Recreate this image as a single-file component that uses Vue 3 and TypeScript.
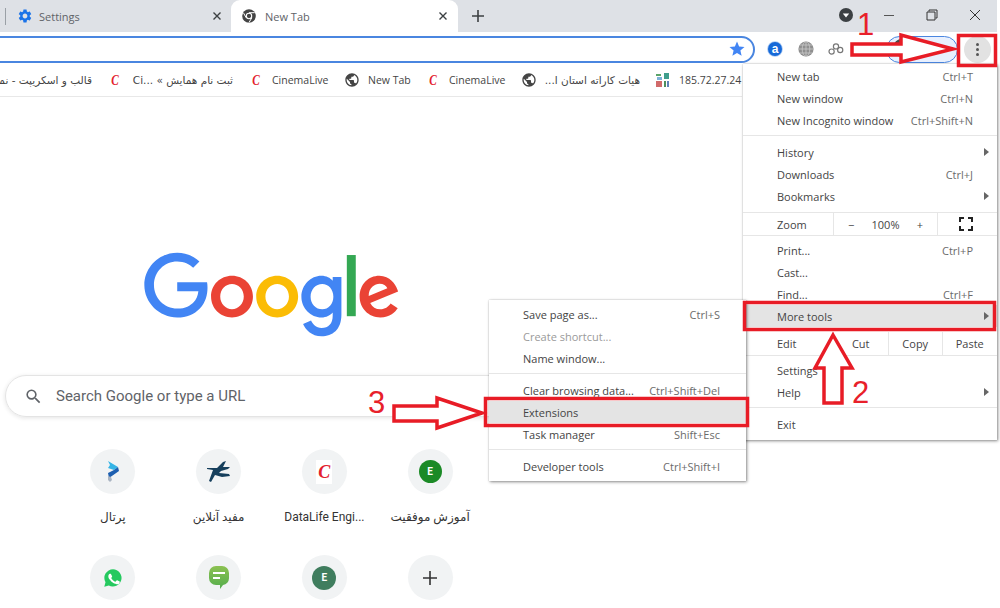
<script setup lang="ts">
interface Bookmark {
  icon: string
  label: string
  width: number
  rtl?: boolean
}

interface MenuRow {
  label?: string
  key?: string
  arrow?: boolean
  muted?: boolean
  active?: boolean
  sep?: boolean
}

const bookmarks: Bookmark[] = [
  { icon: "", label: "قالب و اسکریپت - نمونه", width: 140, rtl: true },
  { icon: "c", label: "ثبت نام همایش » ...Ci", width: 102, rtl: true },
  { icon: "c", label: "CinemaLive", width: 57 },
  { icon: "globe", label: "New Tab", width: 42 },
  { icon: "c", label: "CinemaLive", width: 57 },
  { icon: "globe", label: "هیات کاراته استان ا...", width: 95, rtl: true },
  { icon: "grid", label: "185.72.27.24", width: 63 }
]

const topMenu: MenuRow[] = [
  { label: "New tab", key: "Ctrl+T" },
  { label: "New window", key: "Ctrl+N" },
  { label: "New Incognito window", key: "Ctrl+Shift+N" },
  { sep: true },
  { label: "History", arrow: true },
  { label: "Downloads", key: "Ctrl+J" },
  { label: "Bookmarks", arrow: true }
]

const midMenu: MenuRow[] = [
  { label: "Print...", key: "Ctrl+P" },
  { label: "Cast..." },
  { label: "Find...", key: "Ctrl+F" },
  { label: "More tools", arrow: true, active: true }
]

const endMenu: MenuRow[] = [
  { label: "Settings" },
  { label: "Help", arrow: true },
  { sep: true },
  { label: "Exit" }
]

const subMenu: MenuRow[] = [
  { label: "Save page as...", key: "Ctrl+S" },
  { label: "Create shortcut...", muted: true },
  { label: "Name window..." },
  { sep: true },
  { label: "Clear browsing data...", key: "Ctrl+Shift+Del" },
  { label: "Extensions", active: true },
  { label: "Task manager", key: "Shift+Esc" },
  { sep: true },
  { label: "Developer tools", key: "Ctrl+Shift+I" }
]

const shortcuts = [
  { id: "portal", label: "پرتال" },
  { id: "runner", label: "مفید آنلاین" },
  { id: "cinema", label: "DataLife Engi..." },
  { id: "green-e", label: "آموزش موفقیت" },
  { id: "whatsapp", label: "" },
  { id: "sms", label: "" },
  { id: "teal-e", label: "" },
  { id: "add", label: "" }
]

const globePath =
  "M12 2C6.48 2 2 6.48 2 12s4.48 10 10 10 10-4.48 10-10S17.52 2 12 2zm-1 17.93c-3.95-.49-7-3.85-7-7.93 0-.62.08-1.21.21-1.79L9 15v1c0 1.1.9 2 2 2v1.93zm6.9-2.54c-.26-.81-1-1.39-1.9-1.39h-1v-3c0-.55-.45-1-1-1H8v-2h2c.55 0 1-.45 1-1V7h2c1.1 0 2-.9 2-2v-.41c2.93 1.19 5 4.06 5 7.41 0 2.08-.8 3.97-2.1 5.39z"
</script>

<template>
  <div class="Screen">
    <div class="TabStrip">
      <div class="Tab">
        <span class="TabDivider"></span>
        <svg class="TabIcon" viewBox="0 0 24 24" width="16" height="16">
          <path fill="#1a73e8" d="M19.14 12.94c.04-.3.06-.61.06-.94 0-.32-.02-.64-.07-.94l2.03-1.58c.18-.14.23-.41.12-.61l-1.92-3.32c-.12-.22-.37-.29-.59-.22l-2.39.96c-.5-.38-1.03-.7-1.62-.94l-.36-2.54c-.04-.24-.24-.41-.48-.41h-3.84c-.24 0-.43.17-.47.41l-.36 2.54c-.59.24-1.13.57-1.62.94l-2.39-.96c-.22-.08-.47 0-.59.22L2.74 8.87c-.12.21-.08.47.12.61l2.03 1.58c-.05.3-.09.63-.09.94s.02.64.07.94l-2.03 1.58c-.18.14-.23.41-.12.61l1.92 3.32c.12.22.37.29.59.22l2.39-.96c.5.38 1.03.7 1.62.94l.36 2.54c.05.24.24.41.48.41h3.84c.24 0 .44-.17.47-.41l.36-2.54c.59-.24 1.13-.56 1.62-.94l2.39.96c.22.08.47 0 .59-.22l1.92-3.32c.12-.22.07-.47-.12-.61l-2.01-1.58zM12 15.6c-1.98 0-3.6-1.62-3.6-3.6s1.62-3.6 3.6-3.6 3.6 1.62 3.6 3.6-1.62 3.6-3.6 3.6z" />
        </svg>
        <span class="TabTitle">Settings</span>
        <svg class="TabClose" viewBox="0 0 10 10" width="10" height="10">
          <path d="M1.5 1.5l7 7M8.5 1.5l-7 7" stroke="#3c4043" stroke-width="1.4" />
        </svg>
      </div>
      <div class="Tab TabActive">
        <svg class="TabIcon" viewBox="0 0 16 16" width="16" height="16">
          <circle cx="8" cy="8" r="6.8" fill="#444" />
          <circle cx="8" cy="8" r="2.7" fill="#444" stroke="#fff" stroke-width="1.1" />
          <path d="M8 4.7h5.6M5.2 9.8L2.6 5.1M10.8 9.8l-2.8 4.7" stroke="#fff" stroke-width="1" />
        </svg>
        <span class="TabTitle">New Tab</span>
        <svg class="TabClose" viewBox="0 0 10 10" width="10" height="10">
          <path d="M1.5 1.5l7 7M8.5 1.5l-7 7" stroke="#3c4043" stroke-width="1.4" />
        </svg>
      </div>
      <svg class="NewTab" viewBox="0 0 12 12" width="12" height="12">
        <path d="M6 0v12M0 6h12" stroke="#3c4043" stroke-width="1.6" />
      </svg>
      <div class="WindowControls">
        <svg class="MediaDot" viewBox="0 0 14 14" width="14" height="14">
          <circle cx="7" cy="7" r="7" fill="#3c4043" />
          <path d="M3.8 5.4h6.4L7 9.6z" fill="#fff" />
        </svg>
        <svg class="WinButton" viewBox="0 0 12 12" width="12" height="12">
          <path d="M1 6.5h10" stroke="#555" stroke-width="1" />
        </svg>
        <svg class="WinButton" viewBox="0 0 12 12" width="12" height="12">
          <path d="M3 2.5V1h8v8H9.5M1 3h8v8H1z" fill="none" stroke="#333" stroke-width="1" />
        </svg>
        <svg class="WinButton" viewBox="0 0 12 12" width="12" height="12">
          <path d="M1 1l10 10M11 1L1 11" stroke="#333" stroke-width="1" />
        </svg>
      </div>
    </div>

    <div class="Toolbar">
      <div class="Omnibox">
        <svg viewBox="0 0 24 24" width="18" height="18">
          <path fill="#4285f4" d="M12 17.27L18.18 21l-1.64-7.03L22 9.24l-7.19-.61L12 2 9.19 8.63 2 9.24l5.46 4.73L5.82 21z" />
        </svg>
      </div>
      <div class="Extension">
        <svg viewBox="0 0 16 16" width="16" height="16">
          <circle cx="8" cy="8" r="7.8" fill="#a9c8f2" />
          <circle cx="8" cy="8" r="7" fill="#1669d8" />
          <text class="AmazonA" x="8" y="11.6" text-anchor="middle">a</text>
        </svg>
      </div>
      <div class="Extension">
        <svg viewBox="0 0 16 16" width="16" height="16">
          <circle cx="8" cy="8" r="7.6" fill="#8f8f8f" />
          <path d="M0.5 8h15M8 .5v15M2 4h12M2 12h12" stroke="#c9c9c9" stroke-width=".8" />
          <ellipse cx="8" cy="8" rx="3.8" ry="7.4" fill="none" stroke="#c9c9c9" stroke-width=".8" />
        </svg>
      </div>
      <div class="Extension">
        <svg viewBox="0 0 16 16" width="16" height="16" fill="none" stroke="#777" stroke-width="1.2">
          <circle cx="3.6" cy="10.6" r="2.6" />
          <circle cx="8" cy="5.4" r="2.6" />
          <circle cx="12.2" cy="9" r="2.6" />
        </svg>
      </div>
      <div class="Profile">
        <svg viewBox="0 0 14 26" width="14" height="24">
          <circle cx="11" cy="13" r="9" fill="#f2c230" />
          <path d="M3 7a9 9 0 0 1 16 0z" fill="#4a4a4a" />
        </svg>
      </div>
      <div class="MenuButton">
        <i></i><i></i><i></i>
      </div>
    </div>

    <div class="Bookmarks">
      <div v-for="(mark, index) in bookmarks" :key="index" class="Bookmark">
        <span v-if="mark.icon === 'c'" class="CinemaIcon">C</span>
        <svg v-else-if="mark.icon === 'globe'" viewBox="0 0 24 24" width="16" height="16">
          <path fill="#444" :d="globePath" />
        </svg>
        <svg v-else-if="mark.icon === 'grid'" viewBox="-1 0 16 14" width="16" height="14">
          <rect x="0" y="1" width="5" height="2" fill="#5aa469" />
          <rect x="8" y="0" width="5" height="6" fill="#3f9e8c" />
          <rect x="1" y="4" width="5" height="3" fill="#7fb2d8" />
          <rect x="0" y="8" width="6" height="6" fill="#d16a6a" />
          <rect x="8" y="8" width="2" height="6" fill="#4e8f5d" />
          <rect x="11" y="8" width="2" height="6" fill="#5f84b8" />
        </svg>
        <span class="BookmarkLabel" :class="{ Persian: mark.rtl }" :style="{ width: mark.width + 'px' }">{{ mark.label }}</span>
      </div>
    </div>

    <main class="Page">
      <svg class="Logo" viewBox="0 0 272 92" width="256" height="87">
        <path fill="#EA4335" d="M115.75 47.18c0 12.77-9.99 22.18-22.25 22.18s-22.25-9.41-22.25-22.18C71.25 34.32 81.24 25 93.5 25s22.25 9.32 22.25 22.18zm-9.74 0c0-7.98-5.79-13.44-12.51-13.44S80.99 39.2 80.99 47.18c0 7.9 5.79 13.44 12.51 13.44s12.51-5.55 12.51-13.44z" />
        <path fill="#FBBC05" d="M163.75 47.18c0 12.77-9.99 22.18-22.25 22.18s-22.25-9.41-22.25-22.18c0-12.85 9.99-22.18 22.25-22.18s22.25 9.32 22.25 22.18zm-9.74 0c0-7.98-5.79-13.44-12.51-13.44s-12.51 5.46-12.51 13.44c0 7.9 5.79 13.44 12.51 13.44s12.51-5.55 12.51-13.44z" />
        <path fill="#4285F4" d="M209.75 26.34v39.82c0 16.38-9.66 23.07-21.08 23.07-10.75 0-17.22-7.19-19.66-13.07l8.48-3.53c1.51 3.61 5.21 7.87 11.17 7.87 7.31 0 11.84-4.51 11.84-13v-3.19h-.34c-2.18 2.69-6.38 5.04-11.68 5.04-11.09 0-21.25-9.66-21.25-22.09 0-12.52 10.16-22.26 21.25-22.26 5.29 0 9.49 2.35 11.68 4.96h.34v-3.61h9.25zm-8.56 20.92c0-7.81-5.21-13.52-11.84-13.52-6.72 0-12.35 5.71-12.35 13.52 0 7.73 5.63 13.36 12.35 13.36 6.63 0 11.84-5.63 11.84-13.36z" />
        <path fill="#34A853" d="M225 3v65h-9.5V3h9.5z" />
        <path fill="#EA4335" d="M262.02 54.48l7.56 5.04c-2.44 3.61-8.32 9.83-18.48 9.83-12.6 0-22.01-9.74-22.01-22.18 0-13.19 9.49-22.18 20.92-22.18 11.51 0 17.14 9.16 18.98 14.11l1.01 2.52-29.65 12.28c2.27 4.45 5.8 6.72 10.75 6.72 4.96 0 8.4-2.44 10.92-6.14zm-23.27-7.98l19.82-8.23c-1.09-2.77-4.37-4.7-8.23-4.7-4.95 0-11.84 4.37-11.59 12.93z" />
        <path fill="#4285F4" d="M35.29 41.41V32H67c.31 1.64.47 3.58.47 5.68 0 7.06-1.93 15.79-8.15 22.01-6.05 6.3-13.78 9.66-24.02 9.66C16.32 69.35.36 53.89.36 34.91.36 15.93 16.32.47 35.3.47c10.5 0 17.98 4.12 23.6 9.49l-6.64 6.64c-4.03-3.78-9.49-6.72-16.97-6.72-13.86 0-24.7 11.17-24.7 25.03 0 13.86 10.84 25.03 24.7 25.03 8.99 0 14.11-3.61 17.39-6.89 2.66-2.66 4.41-6.46 5.1-11.65l-22.49.01z" />
      </svg>

      <div class="Search">
        <svg viewBox="0 0 24 24" width="19" height="19">
          <path fill="#5f6368" d="M15.5 14h-.79l-.28-.27A6.47 6.47 0 0 0 16 9.5 6.5 6.5 0 1 0 9.5 16c1.61 0 3.09-.59 4.23-1.57l.27.28v.79l5 4.99L20.49 19l-4.99-5zm-6 0C7.01 14 5 11.99 5 9.5S7.01 5 9.5 5 14 7.01 14 9.5 11.99 14 9.5 14z" />
        </svg>
        <span>Search Google or type a URL</span>
      </div>

      <div class="Shortcuts">
        <div v-for="item in shortcuts" :key="item.id" class="Shortcut">
          <div class="ShortcutIcon">
            <svg v-if="item.id === 'portal'" viewBox="0 0 12 21" width="12" height="21">
              <path d="M1 0l10 6-4 3-6-2 2-3z" fill="#35b4e6" />
              <path d="M11 6l1 4-10 7-1-5 6-3z" fill="#1d5fb0" />
              <path d="M1 15l3 1 1 3-2 2-2-2z" fill="#a9b4c2" />
            </svg>
            <svg v-else-if="item.id === 'runner'" viewBox="0 0 24 21" width="24" height="21">
              <path d="M0 7h10l6-6 3-1-3 6h7l-2 2-7 2-2 2 10 1 1 2-8 1-7-2-4 7-2-1 4-11-6-1z" fill="#163f5c" />
            </svg>
            <span v-else-if="item.id === 'cinema'" class="CinemaTile">C</span>
            <span v-else-if="item.id === 'green-e'" class="LetterIcon GreenE">E</span>
            <svg v-else-if="item.id === 'whatsapp'" viewBox="0 0 24 24" width="20" height="20">
              <path fill="#25c95f" d="M12 1.5A10.4 10.4 0 0 0 3 17.1L1.5 22.5l5.5-1.4A10.4 10.4 0 1 0 12 1.5z" />
              <path fill="#fff" d="M8.6 6.8c-.3 0-.7.1-1 .5-.4.4-1.200 1.200-1.200 2.800s1.200 3.300 1.400 3.500c.2.200 2.400 3.700 5.800 5.100 2.800 1.100 3.400.9 4 .8.600-.1 2-.8 2.300-1.600.3-.8.3-1.500.2-1.600-.1-.1-.3-.2-.7-.4l-2.300-1.100c-.3-.1-.5-.2-.8.200l-1 1.300c-.2.200-.4.300-.7.100-1.400-.7-3.300-1.800-4.600-4.200-.2-.3 0-.5.100-.6l.8-1c.1-.2.100-.4 0-.6L9.700 7.400c-.3-.6-.6-.6-1.100-.6z" />
            </svg>
            <svg v-else-if="item.id === 'sms'" viewBox="0 0 20 23" width="20" height="23">
              <defs>
                <linearGradient id="smsFill" x1="0" y1="0" x2="0" y2="1">
                  <stop offset="0" stop-color="#8cc152" />
                  <stop offset="1" stop-color="#53ad4c" />
                </linearGradient>
              </defs>
              <path d="M7 0h6a7 7 0 0 1 7 7v5a7 7 0 0 1-6 7l-3 4v-4H7a7 7 0 0 1-7-7V7a7 7 0 0 1 7-7z" fill="url(#smsFill)" />
              <path d="M4 7h12M4 12h7" stroke="#fff" stroke-width="2" />
            </svg>
            <span v-else-if="item.id === 'teal-e'" class="LetterIcon TealE">E</span>
            <svg v-else viewBox="0 0 16 16" width="16" height="16">
              <path d="M8 1v14M1 8h14" stroke="#333" stroke-width="1.600" />
            </svg>
          </div>
          <span v-if="item.label" class="ShortcutLabel">{{ item.label }}</span>
        </div>
      </div>
    </main>

    <!-- Chrome's main menu -->
    <div class="Menu MainMenu">
      <template v-for="(row, index) in topMenu" :key="index">
        <div v-if="row.sep" class="MenuSep"></div>
        <div v-else class="MenuRow">
          <span>{{ row.label }}</span>
          <span class="MenuKey">{{ row.key }}</span>
          <i v-if="row.arrow" class="MenuArrow"></i>
        </div>
      </template>
      <div class="MenuSep ZoomSep"></div>
      <div class="MenuRow SplitRow">
        <span class="SplitLabel">Zoom</span>
        <div class="ZoomCell">
          <span>−</span><span>100%</span><span>+</span>
        </div>
        <div class="FullCell">
          <svg viewBox="0 0 14 14" width="14" height="14" fill="none" stroke="#222" stroke-width="2">
            <path d="M1 5V1h4M9 1h4v4M13 9v4H9M5 13H1V9" />
          </svg>
        </div>
      </div>
      <div class="MenuSep ZoomSepBottom"></div>
      <template v-for="(row, index) in midMenu" :key="index">
        <div class="MenuRow" :class="{ MenuActive: row.active }">
          <span>{{ row.label }}</span>
          <span class="MenuKey">{{ row.key }}</span>
          <i v-if="row.arrow" class="MenuArrow"></i>
        </div>
      </template>
      <div class="MenuSep EditSep"></div>
      <div class="MenuRow SplitRow EditRow">
        <span class="SplitLabel">Edit</span>
        <div class="EditCell">Cut</div>
        <div class="EditCell">Copy</div>
        <div class="EditCell">Paste</div>
      </div>
      <div class="MenuSep EditSepBottom"></div>
      <template v-for="(row, index) in endMenu" :key="index">
        <div v-if="row.sep" class="MenuSep"></div>
        <div v-else class="MenuRow">
          <span>{{ row.label }}</span>
          <i v-if="row.arrow" class="MenuArrow"></i>
        </div>
      </template>
    </div>

    <!-- More tools submenu -->
    <div class="Menu SubMenu">
      <template v-for="(row, index) in subMenu" :key="index">
        <div v-if="row.sep" class="MenuSep"></div>
        <div v-else class="MenuRow" :class="{ MenuActive: row.active, MenuMuted: row.muted }">
          <span>{{ row.label }}</span>
          <span class="MenuKey">{{ row.key }}</span>
        </div>
      </template>
    </div>

    <!-- Red tutorial marks drawn over the screenshot -->
    <svg class="Marks" viewBox="0 0 1000 608" width="1000" height="608">
      <g fill="none" stroke="#e81c26" stroke-width="3.5">
        <rect x="958.500" y="35.500" width="37" height="30" />
        <rect x="744.500" y="302.500" width="250" height="27" />
        <rect x="485.500" y="398.500" width="262" height="27" />
      </g>
      <g fill="#fff" stroke="#e81c26" stroke-width="3.5" stroke-linejoin="miter">
        <path d="M852 44H901V35L953 49 901 62V55H852z" />
        <path d="M833 335L852 368H842V403H824V368H815z" />
        <path d="M394 406H437V398L482 413 437 428V421H394z" />
      </g>
    </svg>
    <span class="MarkNumber MarkOne">1</span>
    <span class="MarkNumber MarkTwo">2</span>
    <span class="MarkNumber MarkThree">3</span>
  </div>
</template>

<style>
html,
body {
  margin: 0;
  background: #fff;
  overflow: hidden;
}
</style>

<style scoped>
.Screen {
  position: relative;
  width: 1000px;
  height: 608px;
  overflow: hidden;
  background: #fff;
  font-family: "Open Sans", "DejaVu Sans", sans-serif;
  color: #444;
}

.TabStrip {
  display: flex;
  align-items: stretch;
  width: 997px;
  height: 32px;
  background: #dee1e6;
}

.Tab {
  display: flex;
  align-items: center;
  box-sizing: border-box;
  width: 231px;
  padding-right: 9px;
  font-size: 11px;
  color: #5f6368;
}

.TabDivider {
  width: 1px;
  height: 17px;
  margin: 0 9px 0 5px;
  background: #9aa0a6;
}

.TabIcon {
  flex: none;
  margin-left: 2px;
}

.TabTitle {
  flex: 1;
  margin-left: 6px;
}

.TabActive {
  position: relative;
  width: 227px;
  padding-left: 8px;
  padding-right: 10px;
  border-radius: 9px 9px 0 0;
  background: #fff;
}

.TabActive .TabTitle {
  margin-left: 8px;
}

.NewTab {
  align-self: center;
  margin-left: 14px;
}

.WindowControls {
  display: flex;
  align-items: center;
  margin-left: auto;
  padding: 0 16px 2px 0;
}

.MediaDot {
  margin-right: 30px;
}

.WinButton + .WinButton {
  margin-left: 31px;
}

.Toolbar {
  display: flex;
  align-items: center;
  width: 997px;
  height: 32px;
  background: #fff;
}

.Omnibox {
  display: flex;
  align-items: center;
  justify-content: flex-end;
  flex: none;
  box-sizing: border-box;
  width: 775px;
  height: 27px;
  margin: 2px 5px 0 -20px;
  padding-right: 7px;
  border: 2px solid #4a86e0;
  border-radius: 14px;
}

.Extension {
  display: flex;
  justify-content: center;
  flex: none;
  width: 30.500px;
  margin-top: 2px;
}

.AmazonA {
  font-family: "Liberation Sans", sans-serif;
  font-size: 12px;
  font-weight: 700;
  fill: #fff;
}

.Profile {
  display: flex;
  align-items: center;
  flex: none;
  box-sizing: border-box;
  width: 72px;
  height: 27px;
  margin: 2px 0 0 34px;
  padding-left: 4px;
  border: 1.500px solid #4a86e0;
  border-radius: 14px;
  background: #e8f0fe;
  overflow: hidden;
}

.MenuButton {
  display: flex;
  flex-direction: column;
  align-items: center;
  justify-content: center;
  flex: none;
  gap: 2px;
  width: 27px;
  height: 27px;
  margin: 2px 0 0 6px;
  border-radius: 50%;
  background: #e2e2e2;
}

.MenuButton i {
  width: 3px;
  height: 3px;
  border-radius: 50%;
  background: #555;
}

.Bookmarks {
  display: flex;
  align-items: center;
  justify-content: flex-end;
  box-sizing: border-box;
  width: 742px;
  height: 33px;
  border-bottom: 1px solid #e8e8e8;
  gap: 15px;
}

.Bookmark {
  display: flex;
  align-items: center;
  flex: none;
  gap: 8px;
  font-size: 10.500px;
  color: #444;
}

.BookmarkLabel {
  display: block;
  white-space: nowrap;
  text-align: left;
}

.Persian {
  font-family: "DejaVu Sans", sans-serif;
  font-size: 10.500px;
  direction: rtl;
  text-align: right;
}

.CinemaIcon {
  width: 16px;
  font-family: "Liberation Serif", serif;
  font-size: 15px;
  font-style: italic;
  font-weight: 700;
  line-height: 16px;
  text-align: center;
  color: #e3202c;
  transform: scaleX(0.75);
}

.Page {
  display: flex;
  flex-direction: column;
  align-items: center;
  width: 540px;
}

.Logo {
  margin: 155px 0 0 4px;
}

.Search {
  display: flex;
  align-items: center;
  box-sizing: border-box;
  width: 530px;
  height: 42px;
  margin-top: 36px;
  padding-left: 18px;
  border: 1px solid #e4e4e4;
  border-radius: 21px;
  box-shadow: 0 1px 4px rgba(32, 33, 36, 0.12);
  font-family: Roboto, sans-serif;
  font-size: 15px;
  color: #5f6368;
}

.Search span {
  margin-left: 13px;
}

.Shortcuts {
  display: grid;
  grid-template-columns: repeat(4, 105.750px);
  grid-auto-rows: 106px;
  margin: 32px 0 0 3px;
}

.Shortcut {
  display: flex;
  flex-direction: column;
  align-items: center;
}

.ShortcutIcon {
  display: flex;
  align-items: center;
  justify-content: center;
  width: 45px;
  height: 45px;
  border-radius: 50%;
  background: #f1f3f4;
}

.ShortcutLabel {
  margin-top: 14px;
  font-family: Roboto, "DejaVu Sans", sans-serif;
  font-size: 12px;
  line-height: 18px;
  color: #333;
  white-space: nowrap;
}

.CinemaTile {
  width: 16px;
  background: #fff;
  font-family: "Liberation Serif", serif;
  font-size: 18px;
  font-style: italic;
  font-weight: 700;
  line-height: 24px;
  text-align: center;
  color: #e3202c;
}

.LetterIcon {
  display: flex;
  align-items: center;
  justify-content: center;
  border-radius: 50%;
  font-family: Roboto, sans-serif;
  font-weight: 700;
  color: #fff;
}

.GreenE {
  width: 23px;
  height: 23px;
  background: #1b8a26;
  font-size: 10px;
}

.TealE {
  width: 24px;
  height: 24px;
  background: #3f7d5e;
  font-size: 10px;
}

.Menu {
  position: absolute;
  box-sizing: border-box;
  background: #fff;
  box-shadow: 1px 1px 3px rgba(0, 0, 0, 0.45), 0 0 1px rgba(0, 0, 0, 0.25);
  font-size: 11px;
}

.MainMenu {
  top: 64px;
  left: 743px;
  width: 254px;
  height: 376px;
  padding-top: 1px;
}

.SubMenu {
  top: 300px;
  left: 489px;
  width: 257px;
  height: 181px;
  padding-top: 3px;
}

.MenuRow {
  position: relative;
  display: flex;
  align-items: center;
  justify-content: space-between;
  height: 22px;
  padding: 0 24px 0 34px;
  white-space: nowrap;
}

.MenuKey {
  color: #6b6b6b;
}

.MenuActive {
  background: #e4e4e4;
}

.MenuMuted {
  color: #9a9a9a;
}

.MenuArrow {
  position: absolute;
  right: 8px;
  top: 7px;
  border-top: 4px solid transparent;
  border-bottom: 4px solid transparent;
  border-left: 5px solid #666;
}

.MenuSep {
  height: 1px;
  margin: 4px 0 5px;
  background: #e6e6e6;
}

.ZoomSep {
  margin: 5px 0 0;
}

.ZoomSepBottom {
  margin: 0 0 3px;
}

.EditSep {
  height: 0;
  margin: 0 0 5px;
}

.EditSepBottom {
  margin: 0 0 3px;
}

.SubMenu .MenuRow {
  padding-right: 26px;
}

.SubMenu .MenuSep {
  margin: 4px 0 5px;
}

.SplitRow {
  justify-content: flex-start;
  padding: 0;
}

.SplitLabel {
  width: 56px;
  margin-left: 34px;
}

.EditRow {
  height: 23px;
}

.ZoomCell {
  display: flex;
  align-items: center;
  justify-content: space-between;
  box-sizing: border-box;
  width: 105px;
  height: 100%;
  padding: 0 14px;
  border-left: 1px solid #e6e6e6;
  border-right: 1px solid #e6e6e6;
}

.FullCell {
  display: flex;
  align-items: center;
  justify-content: center;
  flex: 1;
  padding-right: 3px;
}

.EditCell {
  display: flex;
  align-items: center;
  justify-content: center;
  box-sizing: border-box;
  width: 54.500px;
  height: 100%;
  border-left: 1px solid #e6e6e6;
}

.Marks {
  position: absolute;
  top: 0;
  left: 0;
}

.MarkNumber {
  position: absolute;
  font-family: "Liberation Sans", sans-serif;
  font-size: 31px;
  line-height: 31px;
  color: #e8202a;
}

.MarkOne {
  top: 9px;
  left: 857px;
}

.MarkTwo {
  top: 377px;
  left: 852px;
}

.MarkThree {
  top: 387px;
  left: 368px;
}
</style>
